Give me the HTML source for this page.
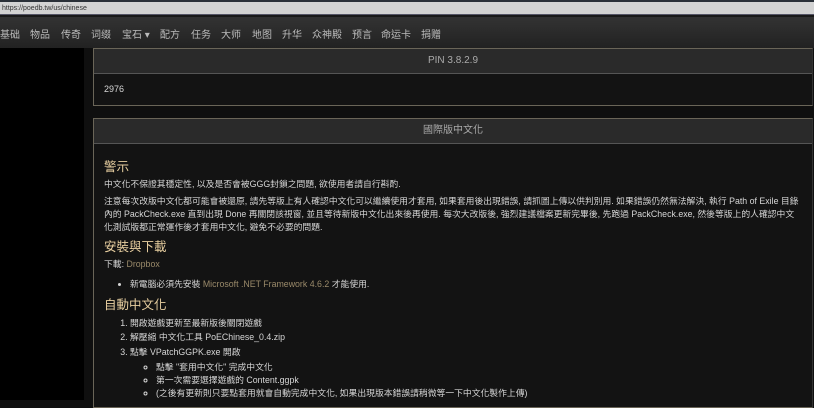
<!DOCTYPE html>
<html><head><meta charset="utf-8"><style>
*{margin:0;padding:0;box-sizing:border-box}
body{width:814px;height:400px;overflow:hidden;background:#0f0f0f;font-family:"Liberation Sans","Noto Sans CJK TC",sans-serif;color:#d6d6d6;position:relative}
.url{position:absolute;left:0;top:0;width:814px;height:15px;background:#d3d3d3;border-top:2px solid #2a3038;border-bottom:1px solid #556;font-size:7px;color:#333;padding:2px 2px;line-height:9px}
.nav{position:absolute;left:0;top:15px;width:814px;height:33px;background:linear-gradient(#333,#222);border-top:2px solid #1a1a1a}
.nav span{position:absolute;top:9px;font-size:10px;color:#bbb}
.left{position:absolute;left:0;top:48px;width:84px;height:352px;background:#000}
.p{position:absolute;left:93px;width:720px;border:1px solid #6a6558;border-right-color:#333;background:#131313}
.ph{height:25px;background:#2a2a2a;text-align:center;font-size:10px;line-height:24px;color:#aaa;border-bottom:1px solid #555}
.pb{padding:8px 10px;font-size:8.8px;line-height:13px}
h3{font-size:12.5px;font-weight:normal;color:#e8cfa0;margin:4px 0 2px;line-height:18px}
p{margin-bottom:4px}
a{color:#9a8a6a;text-decoration:none}
ul,ol{margin-left:26px}
li{line-height:11.5px}
ol li{line-height:14.5px}
ul.c{list-style:circle;margin-left:52px;margin-top:2px}
ul.c li{line-height:13px}
</style></head><body>
<div class="url">https://poedb.tw/us/chinese</div>
<div class="nav">
<span style="left:0">基础</span><span style="left:30px">物品</span><span style="left:61px">传奇</span><span style="left:91px">词缀</span><span style="left:122px">宝石 ▾</span><span style="left:160px">配方</span><span style="left:191px">任务</span><span style="left:221px">大师</span><span style="left:252px">地图</span><span style="left:282px">升华</span><span style="left:312px">众神殿</span><span style="left:352px">预言</span><span style="left:381px">命运卡</span><span style="left:421px">捐赠</span>
</div>
<div class="left"></div>
<div class="p" style="top:48px;height:58px"><div class="ph">PIN 3.8.2.9</div><div class="pb" style="padding-top:9px;font-size:9px">2976</div></div>
<div class="p" style="top:118px;height:290px"><div class="ph">國際版中文化</div>
<div class="pb" style="padding-top:10px">
<h3>警示</h3>
<p>中文化不保證其穩定性, 以及是否會被GGG封鎖之問題, 欲使用者請自行斟酌.</p>
<p>注意每次改版中文化都可能會被還原, 請先等版上有人確認中文化可以繼續使用才套用, 如果套用後出現錯誤, 請抓圖上傳以供判別用. 如果錯誤仍然無法解決, 執行 Path of Exile 目錄內的 PackCheck.exe 直到出現 Done 再關閉該視窗, 並且等待新版中文化出來後再使用. 每次大改版後, 強烈建議檔案更新完畢後, 先跑過 PackCheck.exe, 然後等版上的人確認中文化測試版都正常運作後才套用中文化, 避免不必要的問題.</p>
<h3 style="margin-top:0">安裝與下載</h3>
<p>下載: <a>Dropbox</a></p>
<ul style="margin-top:8px"><li>新電腦必須先安裝 <a>Microsoft .NET Framework 4.6.2</a> 才能使用.</li></ul>
<h3 style="margin-top:5px">自動中文化</h3>
<ol style="margin-top:2px"><li>開啟遊戲更新至最新版後關閉遊戲</li><li>解壓縮 中文化工具 PoEChinese_0.4.zip</li><li>點擊 VPatchGGPK.exe 開啟</li></ol>
<ul class="c"><li>點擊 "套用中文化" 完成中文化</li><li>第一次需要選擇遊戲的 Content.ggpk</li><li>(之後有更新則只要點套用就會自動完成中文化, 如果出現版本錯誤請稍微等一下中文化製作上傳)</li></ul>
</div></div>
</body></html>
